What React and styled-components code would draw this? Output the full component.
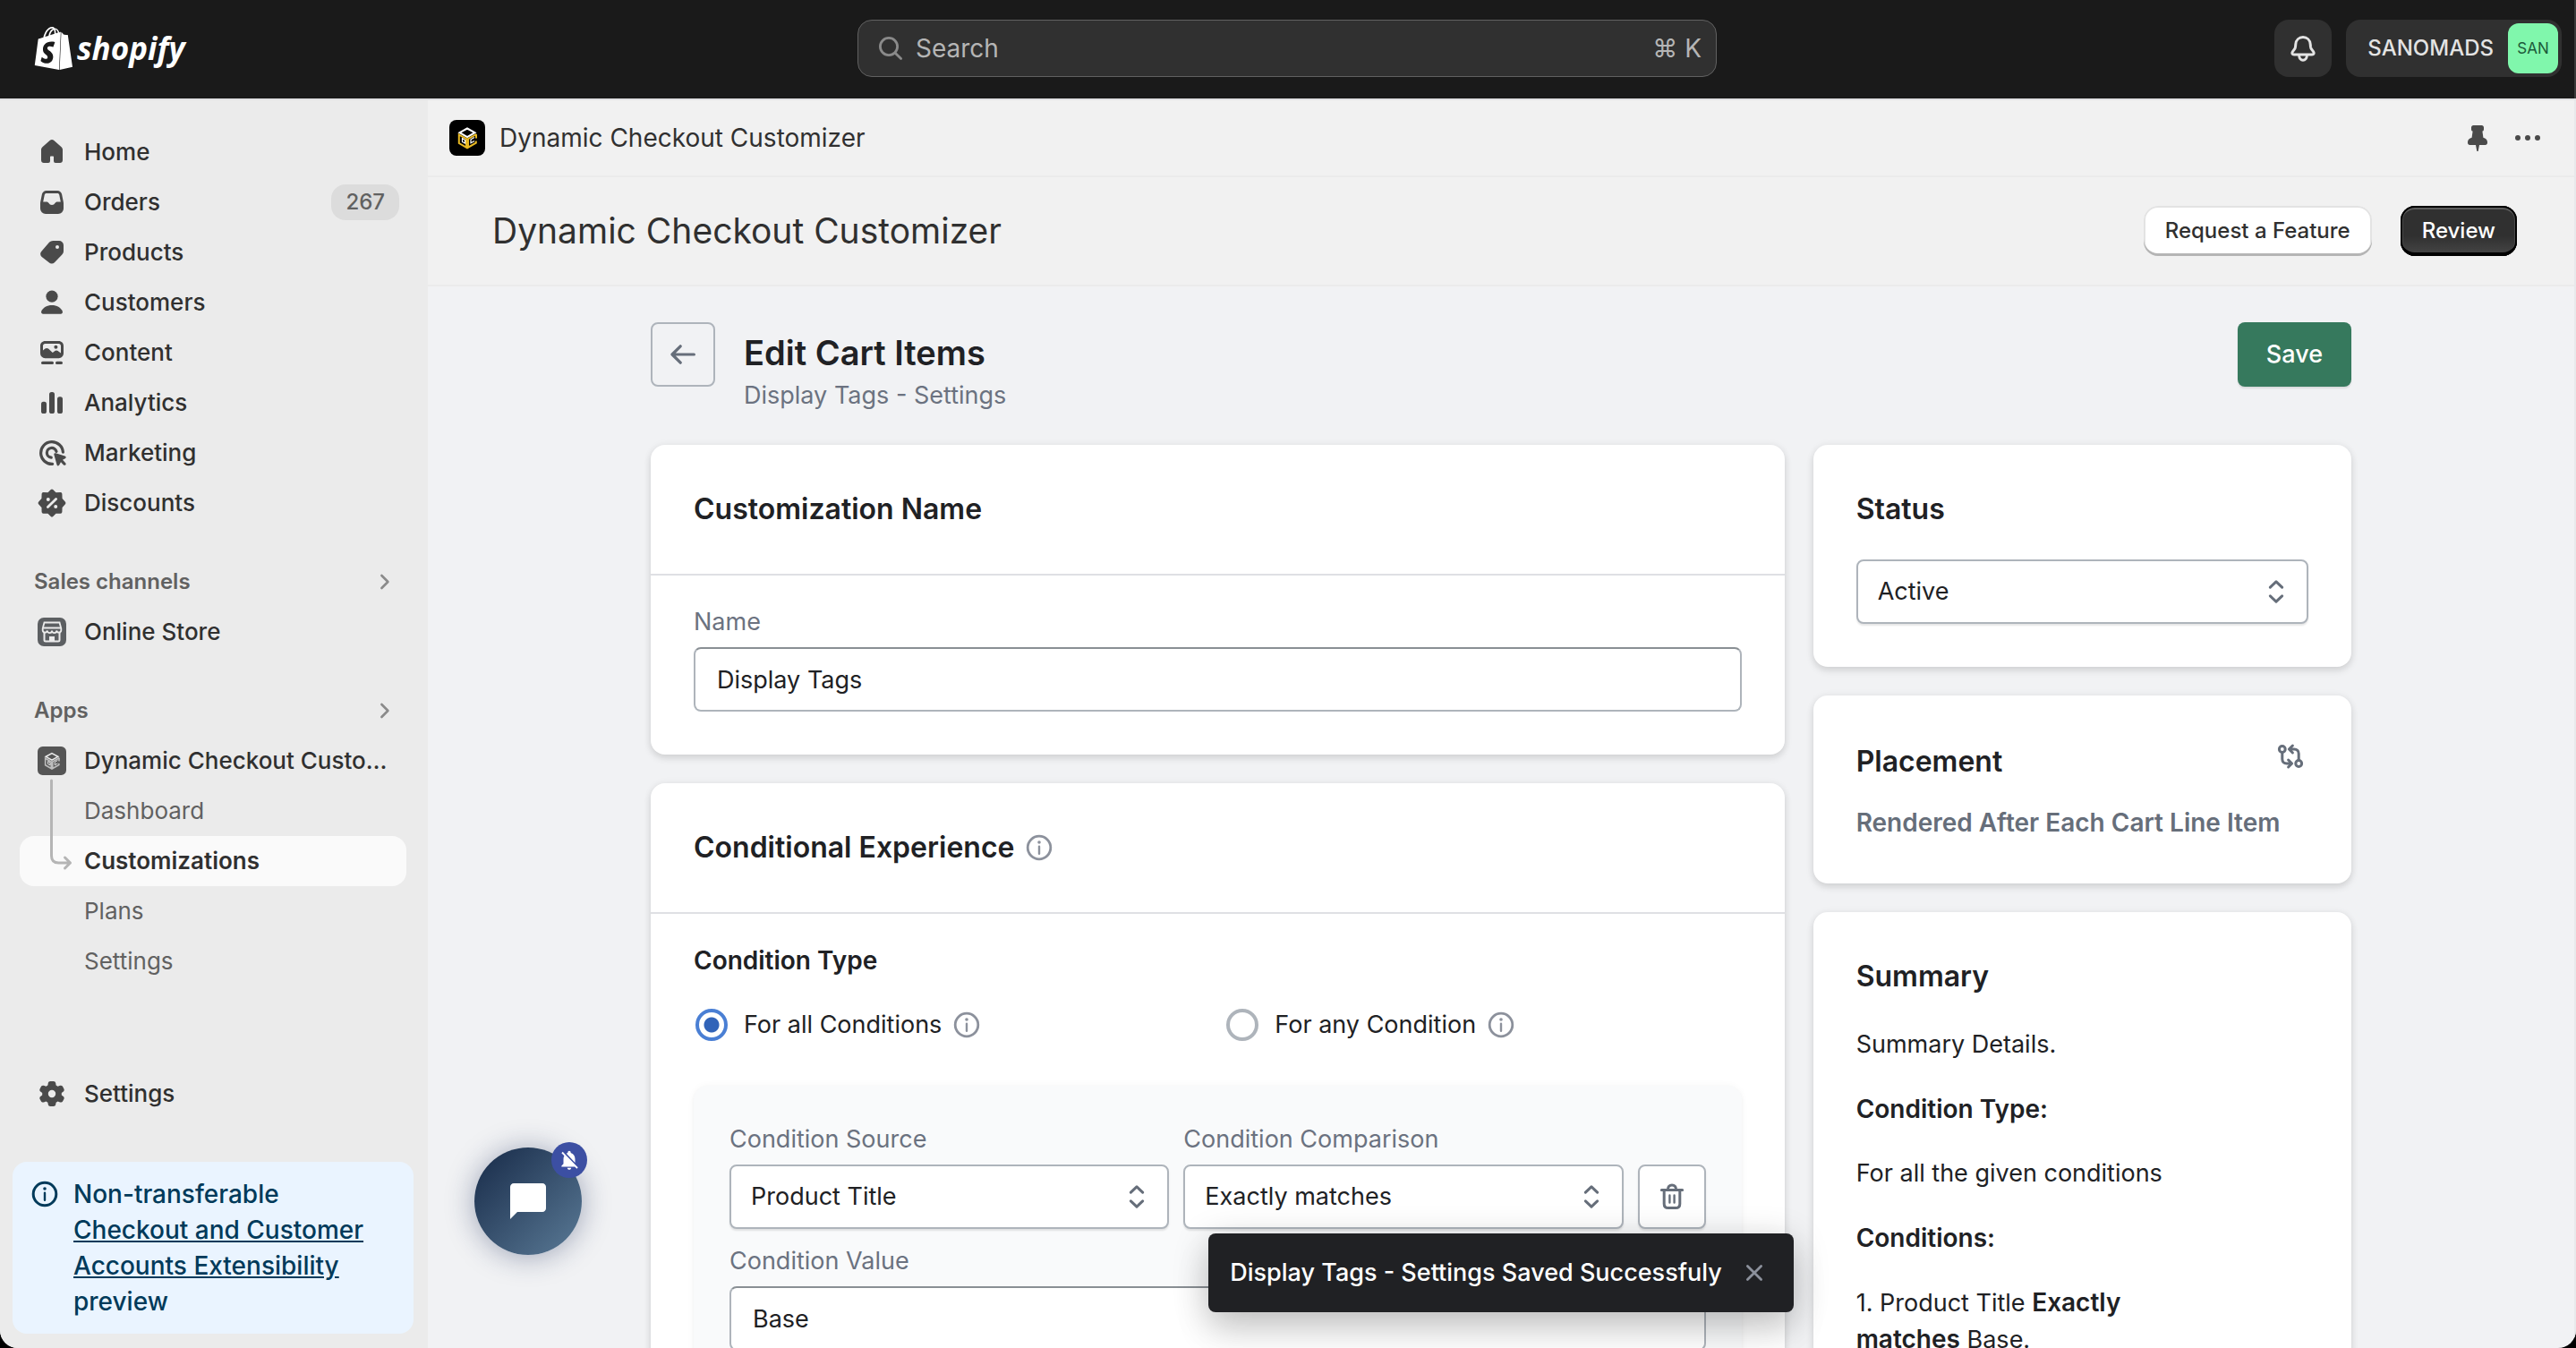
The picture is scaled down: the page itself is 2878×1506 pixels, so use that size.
import React, { useState } from 'react';
import styled, { createGlobalStyle, css } from 'styled-components';
import { SiShopify } from 'react-icons/si';
import { MdChatBubble, MdNotificationsOff } from 'react-icons/md';

/* ---------- icons ---------- */

const Icon = ({ size = 40, children, ...rest }) => (
    <svg width={size} height={size} viewBox="0 0 20 20" fill="currentColor" aria-hidden="true" {...rest}>
        {children}
    </svg>
);

const HomeIcon = () => (
    <Icon>
        <path d="M8.8 3.5a1.8 1.8 0 0 1 2.4 0l4.1 3.6c.45.4.7.95.7 1.5v5.9c0 .85-.65 1.5-1.5 1.5h-2.5a1 1 0 0 1-1-1v-2.4a.4.4 0 0 0-.4-.4h-1.2a.4.4 0 0 0-.4.4V15a1 1 0 0 1-1 1H5.5c-.85 0-1.5-.65-1.5-1.5V8.6c0-.55.25-1.1.7-1.5z" />
    </Icon>
);

const OrdersIcon = () => (
    <Icon>
        <path
            fillRule="evenodd"
            d="M6.9 3.5h6.2c1.2 0 2.2.85 2.45 2l.85 4.2c.07.3.1.6.1.9v2.9a3 3 0 0 1-3 3h-7a3 3 0 0 1-3-3v-2.9c0-.3.03-.6.1-.9l.85-4.2c.25-1.15 1.25-2 2.45-2zm0 1.5c-.5 0-.9.33-1 .8L5.1 9.7h1.8c.7 0 1.1.3 1.4.8.35.6.9 1 1.7 1s1.35-.4 1.7-1c.3-.5.7-.8 1.4-.8h1.8l-.8-3.9c-.1-.47-.5-.8-1-.8z"
        />
    </Icon>
);

const ProductsIcon = () => (
    <Icon>
        <path
            fillRule="evenodd"
            d="M10.6 3.5h3.4A2.5 2.5 0 0 1 16.5 6v3.3c0 .75-.3 1.45-.85 1.95l-4.2 4.4a2.2 2.2 0 0 1-3.1 0L4.2 12.4a2.2 2.2 0 0 1 .1-3.2l4.3-4.9a2.8 2.8 0 0 1 2-.8zM13 8a1 1 0 1 0 0-2 1 1 0 0 0 0 2z"
        />
    </Icon>
);

const CustomersIcon = () => (
    <Icon>
        <circle cx="10" cy="6.6" r="3.3" />
        <path d="M10 11.5c2.7 0 5 1.3 5.9 3.4.3.8-.2 1.5-1 1.5H5.1c-.8 0-1.3-.7-1-1.5.9-2.1 3.2-3.4 5.9-3.4z" />
    </Icon>
);

const ContentIcon = () => (
    <Icon>
        <path
            fillRule="evenodd"
            d="M6.2 3.5h7.6c1.5 0 2.7 1.2 2.7 2.7v4.2c0 1.5-1.2 2.7-2.7 2.7H6.2a2.7 2.7 0 0 1-2.7-2.7V6.2c0-1.5 1.2-2.7 2.7-2.7zm0 1.5C5.5 5 5 5.5 5 6.2v2.6l1.2-1c.5-.45 1.3-.45 1.8 0l2.4 2.2 1.3-1c.5-.4 1.1-.4 1.6 0l1.7 1.2V6.2c0-.7-.5-1.2-1.2-1.2z"
        />
        <circle cx="12.2" cy="6.9" r="1" />
        <rect x="4" y="14.9" width="7" height="1.6" rx=".8" />
        <rect x="12" y="14.9" width="4" height="1.6" rx=".8" />
    </Icon>
);

const AnalyticsIcon = () => (
    <Icon>
        <rect x="4" y="9.4" width="3" height="6.6" rx="1.3" />
        <rect x="8.5" y="4" width="3" height="12" rx="1.3" />
        <rect x="13" y="6.6" width="3" height="9.4" rx="1.3" />
    </Icon>
);

const MarketingIcon = () => (
    <Icon>
        <g fill="none" stroke="currentColor" strokeWidth="1.6" strokeLinecap="round">
            <path d="M10.3 16.2A6.2 6.2 0 1 1 16.2 9.6" />
            <path d="M9.6 12.6A2.7 2.7 0 1 1 12.5 9.2" />
        </g>
        <path d="M11.2 11c-.2-.6.3-1 .9-.9l5.2 1.7c.7.2.7 1 .1 1.3l-1.4.8 1.6 1.7c.3.4.3.8 0 1.1s-.7.3-1.1 0L15 15.1l-.9 1.7c-.3.6-1.1.5-1.3-.1z" />
    </Icon>
);

const DiscountsIcon = () => (
    <Icon>
        <path
            stroke="currentColor"
            strokeWidth="1.8"
            strokeLinejoin="round"
            d="M10 3.2l1.9 1.8 2.9-.1.1 2.9L16.800 10l-1.900 2.1-.1 2.900-2.900 0L10 16.800 8.1 15l-2.900 0-.1-2.900L3.200 10l1.900-2.200.1-2.900 2.900.1z"
        />
        <path d="M12.3 7.700l-4.600 4.600" fill="none" stroke="#ebebeb" strokeWidth="1.400" strokeLinecap="round" />
        <circle cx="7.9" cy="8" r="1" fill="#ebebeb" />
        <circle cx="12.1" cy="12" r="1" fill="#ebebeb" />
    </Icon>
);

const SettingsIcon = () => (
    <Icon>
        <path
            fillRule="evenodd"
            d="M9.1 3h1.8c.6 0 1.1.45 1.2 1l.2 1.3 1 .6 1.25-.5c.55-.2 1.15 0 1.45.5l.7 1.3c.3.5.15 1.15-.3 1.5l-1 .8v1.2l1 .8c.45.35.6 1 .3 1.5l-.7 1.2c-.3.5-.9.75-1.45.5l-1.25-.45-1 .6-.2 1.2c-.1.6-.6 1-1.2 1H9.1c-.6 0-1.1-.4-1.2-1l-.2-1.2-1-.6-1.25.45c-.55.25-1.15 0-1.45-.5l-.7-1.2c-.3-.5-.15-1.15.3-1.5l1-.8V9.500l-1-.8c-.45-.35-.6-1-.3-1.5l.7-1.3c.3-.5.9-.7 1.45-.5l1.25.5 1-.6.2-1.300c.1-.55.6-1 1.2-1zM10 12.100a2.100 2.100 0 1 0 0-4.200 2.100 2.100 0 0 0 0 4.200z"
        />
    </Icon>
);

const StoreIcon = () => (
    <svg width="32" height="32" viewBox="0 0 32 32" aria-hidden="true">
        <rect width="32" height="32" rx="7" fill="#5c5f62" />
        <g fill="none" stroke="#ebebeb">
            <path d="M7.5 5.500h17l1.800 6.500v2.500a2.600 2.600 0 0 1-5.100 0 2.600 2.600 0 0 1-5.200 0 2.600 2.600 0 0 1-5.200 0 2.600 2.600 0 0 1-5.100 0V12z" strokeWidth="1.800" />
            <path d="M6 11.500h20" strokeWidth="2" />
            <path d="M7.500 17v8c0 1 .5 1.500 1.500 1.500h14c1 0 1.500-.5 1.500-1.500v-8" strokeWidth="2" />
        </g>
        <path d="M13 26.500V21h6v5.500" fill="#ebebeb" />
    </svg>
);

const CubeIcon = ({ size, bg, top, side, radius }) => (
    <svg width={size} height={size} viewBox="0 0 40 40" aria-hidden="true">
        <rect width="40" height="40" rx={radius} fill={bg} />
        <g fill="none" strokeWidth="2">
            <path d="M20 9.500l8.500 4.700-8.500 4.800-8.500-4.800z" stroke={top} />
            <path d="M10.800 16.500l8.200 4.700v9.500l-8.200-4.700z" stroke={side} />
            <path d="M30.300 16l-9.300 5.200v9.500l8.800-5v-2.200" stroke={side} />
            <path d="M30 20.500v-4.500" stroke={side} />
            <path d="M14.500 20.500v4l3 1.500v-3.500z" stroke={top} strokeWidth="1.200" />
            <path d="M28 19.500l-4 2.300v4l4-2.300" stroke={top} strokeWidth="1.200" />
        </g>
    </svg>
);

const ChevronRightIcon = () => (
    <Icon>
        <path d="M8.2 6.500L11.700 10l-3.500 3.500" fill="none" stroke="#8a8a8a" strokeWidth="1.300" strokeLinecap="round" strokeLinejoin="round" />
    </Icon>
);

const SearchIcon = () => (
    <Icon>
        <g fill="none" stroke="currentColor" strokeWidth="1.4" strokeLinecap="round">
            <circle cx="9" cy="9" r="4.8" />
            <path d="M12.600 12.600l3.200 3.200" />
        </g>
    </Icon>
);

const BellIcon = () => (
    <Icon>
        <g fill="none" stroke="currentColor" strokeWidth="1.5" strokeLinejoin="round">
            <path d="M10 3.800c-2.300 0-3.900 1.600-4.100 3.900l-.15 1.500c-.05.5-.25 1-.6 1.400l-1 1.300c-.55.8-.1 1.600.8 1.600h10.100c.9 0 1.350-.8.8-1.600l-1-1.300a2.800 2.800 0 0 1-.6-1.400l-.15-1.500C13.900 5.400 12.300 3.800 10 3.800z" />
            <path d="M7.800 14c.1 1.500 1 2.600 2.200 2.600s2.100-1.100 2.200-2.600" />
        </g>
    </Icon>
);

const PinIcon = () => (
    <Icon>
        <path d="M7.700 3h4.600c.7 0 1.200.5 1.200 1.200v1c0 .6-.3 1-.8 1.100l.5 3.600c1.300.3 2.300 1.200 2.300 2.500v.4c0 .7-.5 1.200-1.200 1.200h-3.300l-.6 3.200c-.1.4-.7.4-.8 0L9 14H5.700c-.7 0-1.200-.5-1.200-1.200v-.4c0-1.300 1-2.200 2.300-2.500l.5-3.600c-.5-.1-.8-.5-.8-1.100v-1C6.500 3.500 7 3 7.700 3z" />
    </Icon>
);

const DotsIcon = () => (
    <Icon>
        <circle cx="4.5" cy="10" r="1.5" />
        <circle cx="10" cy="10" r="1.5" />
        <circle cx="15.5" cy="10" r="1.5" />
    </Icon>
);

const InfoIcon = ({ strokeWidth = 1.4 }) => (
    <Icon>
        <circle cx="10" cy="10" r="6.4" fill="none" stroke="currentColor" strokeWidth={strokeWidth} />
        <path d="M10 9.400v4" stroke="currentColor" strokeWidth="1.2" strokeLinecap="round" />
        <circle cx="10" cy="7" r=".9" />
    </Icon>
);

const ArrowLeftIcon = () => (
    <Icon>
        <path d="M16.200 10H4.200M8.600 5.400L4 10l4.600 4.600" fill="none" stroke="currentColor" strokeWidth="1.6" strokeLinecap="round" strokeLinejoin="round" />
    </Icon>
);

const SelectIcon = () => (
    <Icon>
        <path d="M6.700 7.600L10 4.400l3.300 3.200M6.700 12.400l3.300 3.200 3.300-3.200" fill="none" stroke="currentColor" strokeWidth="1.5" strokeLinecap="round" strokeLinejoin="round" />
    </Icon>
);

const TrashIcon = () => (
    <Icon>
        <g fill="none" stroke="currentColor" strokeWidth="1.5" strokeLinecap="round" strokeLinejoin="round">
            <path d="M4.200 6.300h11.600" />
            <path d="M7.700 6c0-1.500.9-2.500 2.300-2.500s2.300 1 2.300 2.500" />
            <path d="M5.600 6.500v7.500c0 1.400.9 2.300 2.300 2.300h4.200c1.400 0 2.300-.9 2.300-2.300V6.500" />
        </g>
        <path d="M8.700 9.200v4.100M11.300 9.200v4.100" stroke="currentColor" strokeWidth="1.2" strokeLinecap="round" />
    </Icon>
);

const CompareIcon = () => (
    <Icon>
        <g fill="none" stroke="currentColor" strokeWidth="1.5" strokeLinecap="round" strokeLinejoin="round">
            <circle cx="5.400" cy="6" r="1.700" />
            <circle cx="14.600" cy="14" r="1.700" />
            <path d="M5.400 7.800v3.700c0 1.500 1 2.500 2.500 2.500h2.600M8.800 12l2 2-2 2" />
            <path d="M14.600 12.200V8.500c0-1.500-1-2.500-2.500-2.500H9.500M11.200 4l-2 2 2 2" />
        </g>
    </Icon>
);

const CloseIcon = () => (
    <Icon>
        <path d="M6.200 6.200l7.600 7.600M13.800 6.200l-7.600 7.600" stroke="currentColor" strokeWidth="1.400" strokeLinecap="round" />
    </Icon>
);

const BranchLine = styled(({ className }) => (
    <svg className={className} width="28" height="106" viewBox="0 0 28 106" fill="none" stroke="#b5b5b5" strokeWidth="3" strokeLinecap="round" strokeLinejoin="round" aria-hidden="true">
        <path d="M3.500 2v84c0 5 2.500 8 8 8h13M18.500 88l6 6-6 6" />
    </svg>
))`
    position: absolute;
    left: 32px;
    top: 48px;
`;

/* ---------- data ---------- */

const mainNav = [
    { label: 'Home', icon: <HomeIcon /> },
    { label: 'Orders', icon: <OrdersIcon />, badge: '267' },
    { label: 'Products', icon: <ProductsIcon /> },
    { label: 'Customers', icon: <CustomersIcon /> },
    { label: 'Content', icon: <ContentIcon /> },
    { label: 'Analytics', icon: <AnalyticsIcon /> },
    { label: 'Marketing', icon: <MarketingIcon /> },
    { label: 'Discounts', icon: <DiscountsIcon /> },
];

const appNav = [
    { label: 'Dashboard' },
    { label: 'Customizations', active: true },
    { label: 'Plans' },
    { label: 'Settings' },
];

/* ---------- parts ---------- */

const SelectField = ({ id, label, hideLabel, options }) => (
    <Field>
        {!hideLabel && <Label htmlFor={id}>{label}</Label>}
        <SelectBox>
            <Select id={id} aria-label={hideLabel ? label : undefined}>
                {options.map((option) => (
                    <option key={option}>{option}</option>
                ))}
            </Select>
            <SelectArrow><SelectIcon /></SelectArrow>
        </SelectBox>
    </Field>
);

const TextField = ({ id, label, value }) => (
    <Field>
        <Label htmlFor={id}>{label}</Label>
        <Input id={id} type="text" defaultValue={value} />
    </Field>
);

const TopBar = () => (
    <TopBarContainer>
        <Logo href="#">
            <SiShopify size={48} />
            <Wordmark>shopify</Wordmark>
        </Logo>
        <SearchButton type="button">
            <SearchIcon />
            <SearchText>Search</SearchText>
            <span>⌘ K</span>
        </SearchButton>
        <TopActions>
            <BellButton type="button" aria-label="Notifications"><BellIcon /></BellButton>
            <AccountButton type="button">
                SANOMADS
                <Avatar>SAN</Avatar>
            </AccountButton>
        </TopActions>
    </TopBarContainer>
);

const Sidebar = () => (
    <SidebarContainer>
        <NavGroup>
            {mainNav.map((item) => (
                <NavItem key={item.label} href="#">
                    <NavIcon>{item.icon}</NavIcon>
                    <NavText>{item.label}</NavText>
                    {item.badge && <Badge>{item.badge}</Badge>}
                </NavItem>
            ))}
        </NavGroup>

        <NavGroup>
            <NavHeading type="button">Sales channels<ChevronRightIcon /></NavHeading>
            <NavItem href="#">
                <NavIcon><StoreIcon /></NavIcon>
                <NavText>Online Store</NavText>
            </NavItem>
        </NavGroup>

        <NavGroup>
            <NavHeading type="button">Apps<ChevronRightIcon /></NavHeading>
            <AppTree>
                <NavItem href="#">
                    <NavIcon><CubeIcon size={32} radius={7} bg="#555" top="#ebebeb" side="#bdbdbd" /></NavIcon>
                    <NavText>Dynamic Checkout Customizer</NavText>
                </NavItem>
                {appNav.map((item) => (
                    <SubNavItem key={item.label} href="#" $active={item.active}>{item.label}</SubNavItem>
                ))}
                <BranchLine />
            </AppTree>
        </NavGroup>

        <SidebarFooter>
            <NavItem href="#">
                <NavIcon><SettingsIcon /></NavIcon>
                <NavText>Settings</NavText>
            </NavItem>
            <InfoBanner>
                <InfoIcon strokeWidth={1.5} />
                <BannerText>
                    Non-transferable <BannerLink href="#">Checkout and Customer Accounts Extensibility</BannerLink> preview
                </BannerText>
            </InfoBanner>
        </SidebarFooter>
    </SidebarContainer>
);

const App = () => {
    const [conditionType, setConditionType] = useState('all');
    const [toastOpen, setToastOpen] = useState(true);

    return (
        <Window>
            <GlobalStyle />
            <TopBar />
            <Body>
                <Sidebar />
                <Main>
                    <AppBar>
                        <CubeIcon size={40} radius={8} bg="#000" top="#fff" side="#e8b923" />
                        <AppName>Dynamic Checkout Customizer</AppName>
                        <IconButton type="button" aria-label="Pin app"><PinIcon /></IconButton>
                        <IconButton type="button" aria-label="More actions"><DotsIcon /></IconButton>
                    </AppBar>
                    <TitleBar>
                        <AppTitle>Dynamic Checkout Customizer</AppTitle>
                        <TitleButton type="button">Request a Feature</TitleButton>
                        <TitleButton type="button" $primary>Review</TitleButton>
                    </TitleBar>

                    <Page>
                        <PageHeader>
                            <BackButton type="button" aria-label="Back"><ArrowLeftIcon /></BackButton>
                            <PageTitles>
                                <PageTitle>Edit Cart Items</PageTitle>
                                <PageSubtitle>Display Tags - Settings</PageSubtitle>
                            </PageTitles>
                            <SaveButton type="button">Save</SaveButton>
                        </PageHeader>

                        <Layout>
                            <Column>
                                <Card>
                                    <CardHeader><CardTitle>Customization Name</CardTitle></CardHeader>
                                    <CardSection>
                                        <TextField id="name" label="Name" value="Display Tags" />
                                    </CardSection>
                                </Card>

                                <Card>
                                    <CardHeader>
                                        <CardTitle>Conditional Experience</CardTitle>
                                        <Hint><InfoIcon /></Hint>
                                    </CardHeader>
                                    <CardSection>
                                        <Subheading>Condition Type</Subheading>
                                        <Choices>
                                            <Choice>
                                                <Radio
                                                    type="radio"
                                                    id="all"
                                                    name="conditionType"
                                                    checked={conditionType === 'all'}
                                                    onChange={() => setConditionType('all')}
                                                />
                                                <ChoiceLabel htmlFor="all">For all Conditions</ChoiceLabel>
                                                <Hint><InfoIcon /></Hint>
                                            </Choice>
                                            <Choice>
                                                <Radio
                                                    type="radio"
                                                    id="any"
                                                    name="conditionType"
                                                    checked={conditionType === 'any'}
                                                    onChange={() => setConditionType('any')}
                                                />
                                                <ChoiceLabel htmlFor="any">For any Condition</ChoiceLabel>
                                                <Hint><InfoIcon /></Hint>
                                            </Choice>
                                        </Choices>
                                        <ConditionPanel>
                                            <ConditionRow>
                                                <SelectField id="source" label="Condition Source" options={['Product Title', 'Product Tag']} />
                                                <SelectField id="comparison" label="Condition Comparison" options={['Exactly matches', 'Contains']} />
                                                <DeleteButton type="button" aria-label="Delete condition"><TrashIcon /></DeleteButton>
                                            </ConditionRow>
                                            <TextField id="value" label="Condition Value" value="Base" />
                                        </ConditionPanel>
                                    </CardSection>
                                </Card>
                            </Column>

                            <SideColumn>
                                <Card $padded>
                                    <CardTitle>Status</CardTitle>
                                    <CardContent>
                                        <SelectField id="status" label="Status" hideLabel options={['Active', 'Inactive']} />
                                    </CardContent>
                                </Card>
                                <Card $padded>
                                    <PlacementHeader>
                                        <CardTitle>Placement</CardTitle>
                                        <PlacementButton type="button" aria-label="Change placement"><CompareIcon /></PlacementButton>
                                    </PlacementHeader>
                                    <PlacementText>Rendered After Each Cart Line Item</PlacementText>
                                </Card>
                                <Card $padded>
                                    <CardTitle>Summary</CardTitle>
                                    <CardContent>
                                        <p>Summary Details.</p>
                                        <Subheading>Condition Type:</Subheading>
                                        <p>For all the given conditions</p>
                                        <Subheading>Conditions:</Subheading>
                                        <SummaryItem>1. Product Title <b>Exactly matches</b> Base.</SummaryItem>
                                    </CardContent>
                                </Card>
                            </SideColumn>
                        </Layout>
                    </Page>

                    <ChatButton type="button" aria-label="Open chat">
                        <MdChatBubble size={48} />
                        <ChatBadge><MdNotificationsOff size={26} /></ChatBadge>
                    </ChatButton>
                    {toastOpen && (
                        <ToastArea>
                            <Toast role="status">
                                Display Tags - Settings Saved Successfuly
                                <ToastClose type="button" aria-label="Dismiss" onClick={() => setToastOpen(false)}><CloseIcon /></ToastClose>
                            </Toast>
                        </ToastArea>
                    )}
                </Main>
            </Body>
        </Window>
    );
};

/* ---------- styles ---------- */

const GlobalStyle = createGlobalStyle`
    * {
        box-sizing: border-box;
    }
    body {
        margin: 0;
        background: #000;
        color: #202124;
        font: 400 28px/40px Inter, sans-serif;
    }
    button, input, select {
        font: inherit;
        color: inherit;
    }
    button {
        margin: 0;
        padding: 0;
        border: 0;
        background: none;
        cursor: pointer;
    }
    h1, h2, h3, p {
        margin: 0;
    }
    a {
        color: inherit;
        text-decoration: none;
    }
    svg {
        display: block;
        flex: none;
    }
`;

const Window = styled.div`
    display: flex;
    flex-direction: column;
    height: 100vh;
    overflow: hidden;
    border-radius: 0 0 20px 20px;
    background: #f1f2f4;
`;

const TopBarContainer = styled.header`
    display: grid;
    grid-template-columns: minmax(0, 1fr) minmax(0, 960px) minmax(0, 1fr);
    align-items: center;
    flex: none;
    height: 110px;
    padding: 0 14px 2px;
    border-right: 2px solid #3a3a3a;
    background: #1a1a1a;
`;

const Logo = styled.a`
    display: flex;
    align-items: center;
    gap: 2px;
    padding-left: 22px;
    color: #fff;
`;

const Wordmark = styled.span`
    font: italic 700 35px/48px "Open Sans", sans-serif;
`;

const SearchButton = styled.button`
    display: flex;
    align-items: center;
    gap: 8px;
    height: 64px;
    padding: 0 16px;
    border: 1px solid #616161;
    border-radius: 16px;
    background: #303030;
    color: #b5b5b5;
    text-align: left;

    svg {
        color: #8a8a8a;
    }
`;

const SearchText = styled.span`
    flex: 1;
`;

const TopActions = styled.div`
    display: flex;
    justify-content: flex-end;
    gap: 16px;
`;

const BellButton = styled.button`
    display: flex;
    align-items: center;
    justify-content: center;
    width: 64px;
    height: 64px;
    border-radius: 16px;
    background: #303030;
    color: #e3e3e3;
`;

const AccountButton = styled.button`
    display: flex;
    align-items: center;
    gap: 16px;
    height: 64px;
    padding: 0 4px 0 24px;
    border-radius: 16px;
    background: #303030;
    color: #e3e3e3;
    font-size: 24px;
    font-weight: 500;
`;

const Avatar = styled.span`
    display: flex;
    align-items: center;
    justify-content: center;
    width: 56px;
    height: 56px;
    border-radius: 12px;
    background: #80f7ac;
    color: #1c5a3a;
    font-size: 17px;
    font-weight: 400;
`;

const Body = styled.div`
    display: flex;
    flex: 1;
    min-height: 0;
    border-top: 2px solid #e1e1e3;
`;

const SidebarContainer = styled.nav`
    display: flex;
    flex-direction: column;
    gap: 32px;
    flex: none;
    width: 478px;
    padding: 30px 16px 16px 14px;
    background: #ebebeb;
    color: #303030;
    font-size: 26px;
`;

const NavGroup = styled.div`
    display: flex;
    flex-direction: column;
    padding: 0 8px;
`;

const navRow = css`
    display: flex;
    align-items: center;
    height: 56px;
    border-radius: 16px;
`;

const NavItem = styled.a`
    ${navRow}
    padding: 0 8px 0 16px;
    font-weight: 500;
`;

const NavIcon = styled.span`
    display: flex;
    justify-content: center;
    width: 40px;
    margin-right: 16px;
    color: #4a4a4a;
`;

const NavText = styled.span`
    flex: 1;
    overflow: hidden;
    text-overflow: ellipsis;
    white-space: nowrap;
`;

const Badge = styled.span`
    padding: 0 16px;
    border-radius: 16px;
    background: #dcdcdc;
    color: #616161;
    font-size: 24px;
`;

const NavHeading = styled.button`
    ${navRow}
    justify-content: space-between;
    padding: 0 4px 0 16px;
    color: #616161;
    font-size: 24px;
    font-weight: 600;
`;

const AppTree = styled.div`
    position: relative;
`;

const SubNavItem = styled.a`
    ${navRow}
    padding-left: 72px;
    background: ${(props) => (props.$active ? '#fafafa' : 'none')};
    color: ${(props) => (props.$active ? '#303030' : '#616161')};
    font-weight: ${(props) => (props.$active ? 600 : 400)};
`;

const SidebarFooter = styled.div`
    display: flex;
    flex-direction: column;
    gap: 48px;
    margin-top: auto;

    > ${NavItem} {
        margin: 0 8px;
    }
`;

const InfoBanner = styled.div`
    display: flex;
    align-items: flex-start;
    gap: 12px;
    padding: 16px;
    border-radius: 16px;
    background: #eaf4ff;
    color: #003a5a;
    font-size: 28px;
    font-weight: 500;
`;

const BannerText = styled.p`
    flex: 1;
    padding-right: 24px;
`;

const BannerLink = styled.a`
    text-decoration: underline;
`;

const Main = styled.main`
    position: relative;
    flex: 1;
    min-width: 0;
    overflow: hidden;
    border-right: 2px solid #e8e9eb;
`;

const AppBar = styled.div`
    display: flex;
    align-items: center;
    gap: 16px;
    height: 86px;
    padding: 0 32px 0 24px;
    border-bottom: 2px solid #ebebeb;
    background: #f1f1f1;
    color: #303030;
`;

const AppName = styled.span`
    flex: 1;
`;

const IconButton = styled.button`
    color: #4a4a4a;
`;

const TitleBar = styled.div`
    display: flex;
    align-items: center;
    gap: 32px;
    height: 122px;
    padding: 0 64px 0 72px;
    border-bottom: 2px solid #ebebeb;
    background: #f1f1f1;
`;

const AppTitle = styled.h1`
    flex: 1;
    color: #303030;
    font-size: 39px;
    font-weight: 400;
`;

const TitleButton = styled.button`
    height: 56px;
    padding: 0 24px;
    border-radius: 16px;
    background: #fff;
    color: #303030;
    font-size: 24px;
    font-weight: 500;
    box-shadow: inset 0 -3px 0 #b5b5b5, inset 0 0 0 2px #e3e3e3;

    ${(props) => props.$primary && css`
        background: linear-gradient(#303030 60%, #474747);
        color: #fff;
        box-shadow: inset 0 0 0 2px #000, inset 0 -4px 0 #000, inset 0 4px 0 #5c5c5c, inset 0 0 0 3px #4a4a4a;
    `}
`;

const Page = styled.div`
    max-width: 1996px;
    margin: 0 auto;
    padding: 40px 48px 0;
    font-size: 27px;
`;

const PageHeader = styled.div`
    display: flex;
    align-items: flex-start;
    gap: 32px;
    margin-bottom: 35px;
`;

const outlined = css`
    display: flex;
    align-items: center;
    justify-content: center;
    height: 72px;
    border: 2px solid #aeb4bb;
    border-radius: 8px;
    color: #666e7a;
`;

const BackButton = styled.button`
    ${outlined}
    width: 72px;
`;

const PageTitles = styled.div`
    flex: 1;
    padding-top: 6px;
`;

const PageTitle = styled.h2`
    font-size: 38px;
    font-weight: 600;
    line-height: 56px;
`;

const PageSubtitle = styled.p`
    color: #6b7280;
`;

const SaveButton = styled.button`
    height: 72px;
    padding: 0 32px;
    border-radius: 8px;
    background: #36795d;
    color: #fff;
    font-weight: 500;
    box-shadow: 0 2px 2px rgba(0, 0, 0, 0.1);
`;

const Layout = styled.div`
    display: grid;
    grid-template-columns: minmax(0, 2fr) minmax(0, 1fr);
    align-items: start;
`;

const Column = styled.div`
    display: flex;
    flex-direction: column;
    gap: 32px;
`;

const SideColumn = styled(Column)`
    padding-left: 32px;
`;

const Card = styled.section`
    padding: ${(props) => (props.$padded ? '48px' : 0)};
    border-radius: 16px;
    background: #fff;
    box-shadow: 0 0 10px rgba(23, 24, 24, 0.05), 0 4px 8px rgba(0, 0, 0, 0.12);
`;

const CardHeader = styled.div`
    display: flex;
    align-items: center;
    gap: 8px;
    padding: 48px;
    border-bottom: 2px solid #dfe0e4;
`;

const CardTitle = styled.h3`
    font-size: 32px;
    font-weight: 600;
    line-height: 48px;
`;

const CardSection = styled.div`
    padding: 32px 48px 48px;
`;

const CardContent = styled.div`
    display: flex;
    flex-direction: column;
    gap: 32px;
    margin-top: 32px;
`;

const Subheading = styled.p`
    font-size: 28px;
    font-weight: 600;
`;

const SummaryItem = styled.p`
    max-width: 75%;

    b {
        font-size: 28px;
        font-weight: 600;
    }
`;

const Hint = styled.span`
    color: #8c919c;
`;

const Field = styled.div`
    display: flex;
    flex-direction: column;
    gap: 8px;
    flex: 1;
    min-width: 0;
`;

const Label = styled.label`
    color: #6b7280;
`;

const Input = styled.input`
    width: 100%;
    height: 72px;
    padding: 0 24px;
    border: 2px solid #aeb4bb;
    border-top-color: #898f94;
    border-radius: 8px;
    background: #fff;
`;

const SelectBox = styled.div`
    position: relative;
`;

const Select = styled.select`
    display: block;
    width: 100%;
    height: 72px;
    padding: 0 64px 0 22px;
    border: 2px solid #aeb4bb;
    border-radius: 8px;
    appearance: none;
    background: #fff;
    box-shadow: 0 2px 2px rgba(0, 0, 0, 0.1);
`;

const SelectArrow = styled.span`
    position: absolute;
    top: 16px;
    right: 16px;
    color: #666e7a;
    pointer-events: none;
`;

const Choices = styled.div`
    display: grid;
    grid-template-columns: 1fr 1fr;
    gap: 16px;
    margin: 32px 0 48px;
`;

const Choice = styled.div`
    display: flex;
    align-items: center;
`;

const Radio = styled.input`
    appearance: none;
    width: 36px;
    height: 36px;
    margin: 2px;
    border: 4px solid #aeb4bb;
    border-radius: 50%;
    background: #fff;

    &:checked {
        border-color: #4a7fd4;
        background: radial-gradient(#3163b8 8px, #fff 9px);
    }
`;

const ChoiceLabel = styled.label`
    padding: 0 8px 0 16px;
`;

const ConditionPanel = styled.div`
    display: flex;
    flex-direction: column;
    gap: 16px;
    padding: 40px;
    border-radius: 16px;
    background: #f9fafb;
    box-shadow: 0 0 8px rgba(23, 24, 24, 0.04), 0 2px 4px rgba(0, 0, 0, 0.04);
`;

const ConditionRow = styled.div`
    display: flex;
    align-items: flex-end;
    gap: 16px;
`;

const DeleteButton = styled.button`
    ${outlined}
    width: 76px;
    background: #fff;
    box-shadow: 0 2px 2px rgba(0, 0, 0, 0.1);
`;

const PlacementHeader = styled.div`
    display: flex;
    align-items: flex-end;
    justify-content: space-between;
    height: 50px;
    margin-bottom: 24px;
`;

const PlacementButton = styled.button`
    align-self: flex-start;
    color: #666e7a;
`;

const PlacementText = styled.p`
    color: #666e7a;
    font-size: 28px;
    font-weight: 600;
`;

const ChatButton = styled.button`
    position: absolute;
    left: 52px;
    bottom: 104px;
    display: flex;
    align-items: center;
    justify-content: center;
    width: 120px;
    height: 120px;
    border-radius: 50%;
    background: linear-gradient(135deg, #172a48, #5a7a96);
    color: #fff;
    box-shadow: 0 2px 32px rgba(30, 45, 90, 0.4);
`;

const ChatBadge = styled.span`
    position: absolute;
    top: -6px;
    right: -6px;
    display: flex;
    align-items: center;
    justify-content: center;
    width: 40px;
    height: 40px;
    border-radius: 50%;
    background: #3c4fa3;
`;

const ToastArea = styled.div`
    position: absolute;
    left: 0;
    right: 0;
    bottom: 40px;
    display: flex;
    justify-content: center;
    pointer-events: none;
`;

const Toast = styled.div`
    display: flex;
    align-items: center;
    gap: 16px;
    height: 88px;
    padding: 0 24px;
    border-radius: 8px;
    background: #202124;
    color: #fff;
    font-size: 27px;
    font-weight: 500;
    box-shadow: 0 8px 40px rgba(0, 0, 0, 0.2), 0 24px 40px rgba(0, 0, 0, 0.1);
    pointer-events: auto;
`;

const ToastClose = styled.button`
    color: #8c919c;
`;

export default App;
